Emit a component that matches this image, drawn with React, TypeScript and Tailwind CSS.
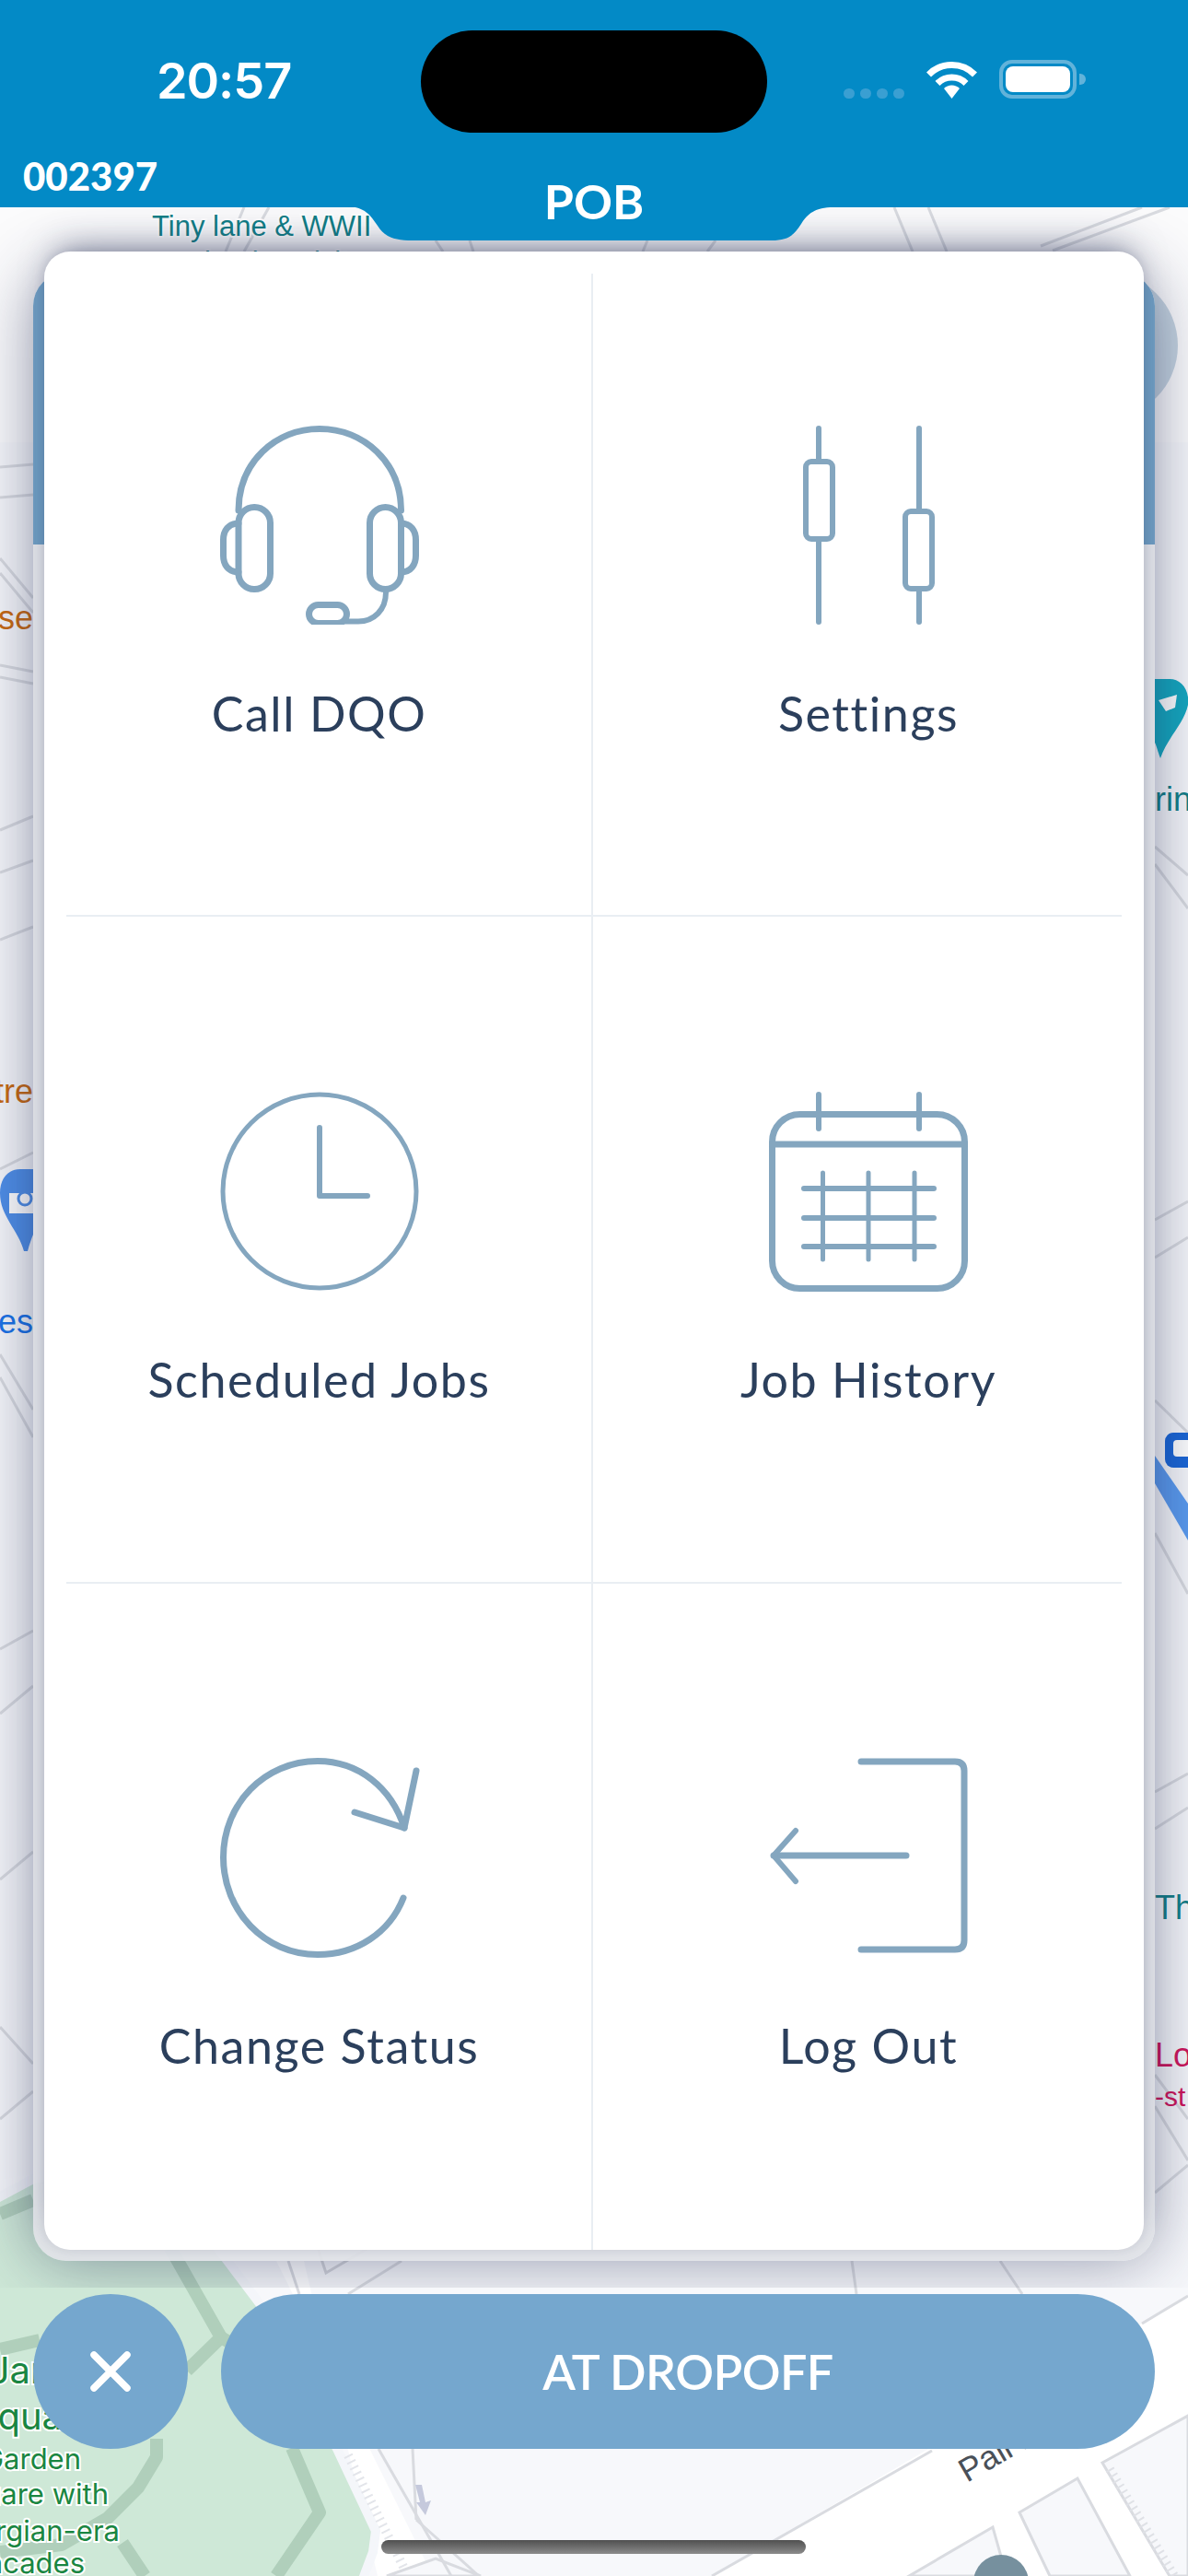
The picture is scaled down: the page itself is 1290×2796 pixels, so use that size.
import React from "react";

const stroke = "#84a6bf";

function Headset() {
  return (
    <svg width="216" height="216" viewBox="0 0 216 216" fill="none" stroke={stroke} strokeWidth="7" strokeLinecap="round" className="block overflow-hidden">
      <path d="M20 92 C20 40 60 3.5 108 3.5 C156 3.5 196.5 40 196.5 92" />
      <rect x="20" y="88.5" width="34.5" height="89" rx="17" />
      <rect x="162.5" y="88.5" width="34" height="89" rx="17" />
      <path d="M20 106 C9 106 3.5 114 3.5 124 V141 C3.5 151 9 159 20 159" />
      <path d="M196.5 106 C207 106 212.5 114 212.5 124 V141 C212.5 151 207 159 196.5 159" />
      <path d="M180 181 C180 200 167 212.5 150 212.5 H136" strokeWidth="6" />
      <rect x="96.5" y="194.5" width="41" height="20" rx="10" />
    </svg>
  );
}

function Sliders() {
  return (
    <svg width="216" height="216" viewBox="0 0 216 216" fill="none" stroke={stroke} strokeWidth="6" strokeLinecap="round" className="block">
      <path d="M54 3 V37 M54 125 V213" />
      <rect x="40" y="39" width="29" height="84" rx="6" />
      <path d="M163 3 V91 M163 179 V213" />
      <rect x="148" y="93" width="29" height="84" rx="6" />
    </svg>
  );
}

function Clock() {
  return (
    <svg width="216" height="216" viewBox="0 0 216 216" fill="none" stroke={stroke} strokeWidth="6" strokeLinecap="round" strokeLinejoin="round" className="block">
      <circle cx="108" cy="108" r="105" strokeWidth="5" />
      <path d="M108 39 V113 H160" />
    </svg>
  );
}

function Calendar() {
  return (
    <svg width="216" height="216" viewBox="0 0 216 216" fill="none" stroke={stroke} strokeWidth="7" strokeLinecap="round" className="block overflow-visible">
      <rect x="3.5" y="24.5" width="209" height="189" rx="30" />
      <path d="M3.5 57 H212.5" />
      <path d="M54 3 V40 M163 3 V40" strokeWidth="6" />
      <path d="M38 105 H179 M38 137 H179 M38 168 H179" strokeWidth="6" />
      <path d="M58.5 88 V182 M108 88 V182 M158 88 V182" strokeWidth="5" />
    </svg>
  );
}

function Refresh() {
  return (
    <svg width="216" height="216" viewBox="0 0 216 216" fill="none" stroke={stroke} strokeWidth="7" strokeLinecap="round" strokeLinejoin="round" className="block overflow-visible">
      <path d="M199 152 C184 190 148 213.5 106 213.5 C48 213.5 3.5 166 3.5 108 C3.5 50 48 3.5 106 3.5 C150 3.5 186 32 200 76" />
      <path d="M213 14 L200 76 L146 59" />
    </svg>
  );
}

function Logout() {
  return (
    <svg width="216" height="216" viewBox="0 0 216 216" fill="none" stroke={stroke} strokeWidth="7" strokeLinecap="round" strokeLinejoin="round" className="block overflow-visible">
      <path d="M100 4 H202 Q212 4 212 14 V198 Q212 208 202 208 H100" />
      <path d="M149 106 H5" />
      <path d="M29 79 L5 106 L29 134" strokeWidth="6" />
    </svg>
  );
}

const gl = [
  [971, 225, 991, 273], [1008, 225, 1028, 273], [1130, 267, 1240, 225], [1143, 272, 1270, 225],
  [473, 261, 481, 273], [510, 261, 514, 273], [703, 261, 698, 273], [777, 261, 768, 273],
  [292, 225, 265, 273], [265, 225, 245, 273],
  [0, 507, 36, 504], [0, 540, 36, 537], [0, 606, 36, 649], [0, 622, 36, 665],
  [0, 722, 36, 729], [0, 735, 36, 742], [0, 901, 36, 886], [0, 947, 36, 934], [0, 1020, 36, 1006], [0, 1269, 36, 1251],
  [0, 1470, 36, 1530], [0, 1495, 36, 1560], [0, 1790, 36, 1770], [0, 1860, 36, 1830], [0, 2040, 36, 2010], [0, 2200, 36, 2240], [0, 2300, 36, 2270],
  [1254, 919, 1290, 950], [1254, 938, 1290, 986], [1254, 1324, 1290, 1304], [1254, 1365, 1290, 1343],
  [1254, 1520, 1290, 1555], [1254, 1664, 1290, 1730], [1254, 1945, 1290, 1925], [1254, 1985, 1290, 1962],
  [1254, 2252, 1290, 2300], [1254, 2286, 1290, 2345], [1254, 2380, 1290, 2350],
  [313, 2454, 325, 2490], [378, 2490, 436, 2454], [925, 2454, 930, 2490], [1086, 2454, 1110, 2490],
  [1240, 2522, 1290, 2492], [411, 2658, 490, 2796], [448, 2658, 452, 2735], [452, 2735, 520, 2796],
  [773, 2796, 1012, 2660],
];

function MapLayer() {
  return (
    <svg className="absolute top-0 left-0" width="1290" height="2796" viewBox="0 0 1290 2796" fontFamily="'Liberation Sans', sans-serif">
      <rect x="0" y="0" width="1290" height="2796" fill="#f7f8fb" />
      <path d="M0 225 H1290 V480 H0 Z" fill="#fbfbfc" />
      <path d="M773 2796 L1240 2522 L1290 2492 V2622 L1197 2673 L1270 2796 Z" fill="#ffffff" />
      <path d="M300 2454 L470 2796 H410 L330 2454 Z" fill="#ffffff" />
      <path d="M1197 2673 L1290 2622 V2796 H1270 Z" fill="#f7f8fb" stroke="#d9dbe0" strokeWidth="3" />
      <path d="M1107 2727 L1170 2690 L1227 2796 H1140 Z" fill="#f7f8fb" stroke="#d9dbe0" strokeWidth="3" />
      <path d="M987 2796 L1078 2743 L1093 2796 Z" fill="#f7f8fb" stroke="#d9dbe0" strokeWidth="3" />
      <path d="M420 2796 L473 2777 L522 2796 Z" fill="#f7f8fb" stroke="#d9dbe0" strokeWidth="3" />
      <path d="M354 2467 L400 2440 L345 2440 Z" fill="none" stroke="#d3d5da" strokeWidth="3" />
      <path d="M-20 2395 L36 2365 L160 2340 L247 2454 L287 2507 L367 2660 L408 2747 L405 2770 L390 2810 H-20 Z" fill="#cee8d7" stroke="#f4f6fa" strokeWidth="10" strokeLinejoin="round" />
      <g fill="none" stroke="#b0cfbb" strokeWidth="14" strokeLinejoin="round">
        <path d="M185 2440 L240 2537 L203 2573" />
        <path d="M240 2537 L280 2560" />
        <path d="M0 2550 L43 2540" />
        <path d="M170 2647 V2667 L150 2700 L117 2733 L67 2762 L0 2770" />
        <path d="M317 2657 L347 2727 L300 2796" />
        <path d="M133 2760 L157 2796" />
        <path d="M0 2403 L36 2388" />
      </g>
      <g stroke="#d9dbe0" strokeWidth="3" fill="none">
        {gl.map(([a, b, c, d], i) => (
          <line key={i} x1={a} y1={b} x2={c} y2={d} />
        ))}
      </g>
      <path d="M378 2665 L440 2790" stroke="#e3e5ea" strokeWidth="10" strokeDasharray="2 5" fill="none" />
      <path d="M1205 2680 L1275 2796" stroke="#dfe1e6" strokeWidth="10" strokeDasharray="2 5" fill="none" />
      <path d="M451 2697 L458 2697 L462 2716 L468 2714 L462 2730 L452 2716 L456 2716 Z" fill="#c5c9dc" />
      <text x="165" y="256" fontSize="31" fill="#127f87" stroke="#ffffff" strokeWidth="4" paintOrder="stroke">Tiny lane &amp; WWII</text>
      <text x="222" y="295" fontSize="31" fill="#127f87" stroke="#ffffff" strokeWidth="4" paintOrder="stroke">bunker visit</text>
      <text x="36" y="683" textAnchor="end" fontSize="36" fill="#c96a10">se</text>
      <text x="36" y="1197" textAnchor="end" fontSize="36" fill="#c96a10">tre</text>
      <text x="36" y="1447" textAnchor="end" fontSize="36" fill="#1a73e8">nes</text>
      <path d="M36 1269 H22 C8 1269 0 1280 0 1295 C0 1320 20 1335 26 1358 H30 C32 1350 34 1345 36 1340 Z" fill="#4f8fe8" />
      <rect x="10" y="1295" width="26" height="22" fill="#ffffff" />
      <circle cx="27" cy="1301" r="7" fill="none" stroke="#4f8fe8" strokeWidth="3" />
      <path d="M1254 737 H1270 C1282 737 1292 748 1290 765 C1286 785 1268 800 1260 823 C1257 815 1256 810 1254 806 Z" fill="#14a8bf" />
      <path d="M1258 760 L1278 754 L1276 768 L1266 772 Z" fill="#ffffff" />
      <text x="1254" y="880" fontSize="36" fill="#127f87">rin</text>
      <path d="M1254 1580 L1290 1632 V1672 L1254 1610 Z" fill="#5a9bef" />
      <rect x="1265" y="1555" width="50" height="38" rx="9" fill="#1a66d6" />
      <rect x="1274" y="1563" width="22" height="18" rx="4" fill="#ffffff" />
      <text x="1254" y="2083" fontSize="36" fill="#127f87">Th</text>
      <text x="1254" y="2243" fontSize="36" fill="#d0145a">Lo</text>
      <text x="1254" y="2286" fontSize="30" fill="#d0145a">-st</text>
      <g fontFamily="Inter, sans-serif" fill="#1a8641" stroke="#ffffff" strokeWidth="4" paintOrder="stroke" textAnchor="end">
        <text x="48" y="2587" fontSize="40">Jar</text>
        <text x="68" y="2637" fontSize="40">qua</text>
        <text x="88" y="2680" fontSize="31">Garden</text>
        <text x="118" y="2718" fontSize="31">uare with</text>
        <text x="130" y="2758" fontSize="31">rgian-era</text>
        <text x="92" y="2793" fontSize="31">acades</text>
      </g>
      <text transform="translate(1050 2695) rotate(-30)" fontSize="36" fill="#4a5058">Pall Mall</text>
      <circle cx="1087" cy="2803" r="30" fill="#76909e" />
      <circle cx="1199" cy="375" r="80" fill="#c5d4e0" />
    </svg>
  );
}

function Wifi() {
  return (
    <svg width="57" height="41" viewBox="0 0 57 41" className="block" fill="none" stroke="#ffffff" strokeWidth="7">
      <path d="M3.5 15 A35 35 0 0 1 53.5 15" />
      <path d="M13 24.5 A22 22 0 0 1 44 24.5" />
      <path d="M28.5 41 L20 30 A12 12 0 0 1 37 30 Z" fill="#ffffff" stroke="none" />
    </svg>
  );
}

function Cell({ label, icon, left, pt, first }: { label: string; icon: React.ReactNode; left?: boolean; pt: string; first?: boolean }) {
  return (
    <div className={left ? `flex flex-col items-center border-r-2 border-[#e9eef3] pl-[3px] ${first ? "mt-[24px]" : ""} ${pt}` : `flex flex-col items-center ${pt}`}>
      {icon}
      <div className="mt-[70px] text-[52px] leading-none tracking-[0.03em] text-[#2b3f5c] font-[Lato,sans-serif]">{label}</div>
    </div>
  );
}

export default function App() {
  return (
    <div className="relative w-[1290px] h-[2796px] overflow-hidden font-[Lato,sans-serif]">
      <MapLayer />

      <header className="relative z-10 h-[225px] bg-[#038ac6] pt-[33px] text-white">
        <svg className="absolute top-[224px] left-0" width="1290" height="38" viewBox="0 224 1290 38">
          <path d="M372 224 H378 C396 225 402 233 410 245 C418 258 430 261 448 261 H838 C855 261 862 256 870 243 C877 232 885 225 905 225 V224 Z" fill="#038ac6" />
        </svg>
        <div className="flex h-[111px]">
          <div className="w-[457px] pl-[170px] pt-[28px] text-[54px] leading-none font-semibold font-[Inter,sans-serif] tracking-[-0.02em]">20:57</div>
          <div className="w-[376px] h-[111px] rounded-[56px] bg-black" />
          <div className="flex items-end gap-[23px] pl-[83px] h-[74px]">
            <div className="flex gap-[6px]">
              <div className="w-[12px] h-[11px] rounded-full bg-[#3a9fd2]" />
              <div className="w-[12px] h-[11px] rounded-full bg-[#3a9fd2]" />
              <div className="w-[12px] h-[11px] rounded-full bg-[#3a9fd2]" />
              <div className="w-[12px] h-[11px] rounded-full bg-[#3a9fd2]" />
            </div>
            <Wifi />
            <div className="flex items-center gap-[3px]">
              <div className="w-[84px] h-[42px] rounded-[14px] border-[4px] border-[#62b3da] p-[3px]">
                <div className="w-full h-full rounded-[8px] bg-white" />
              </div>
              <div className="w-[7px] h-[12px] rounded-r-full bg-[#62b3da]" />
            </div>
          </div>
        </div>
        <div className="relative grid grid-cols-[1fr_auto_1fr] mt-[26px]">
          <div className="pl-[25px] text-[42px] leading-none font-black">002397</div>
          <div className="pt-[22px] text-[52px] leading-none font-bold">POB</div>
          <div />
        </div>
      </header>

      <main className="relative">
        <div className="overflow-hidden h-[2258px] px-[36px] pt-[71px]">
          <div className="relative rounded-[36px] bg-[#e0e3e8]/95 shadow-[0_0_72px_rgba(30,40,80,0.46)] pb-[12px]">
            <div className="absolute top-0 left-0 right-0 h-[295px] rounded-t-[36px] bg-[#6f9dc2]" />
            <div className="relative top-[-23px] -mb-[23px] mx-[12px] rounded-[28px] bg-white shadow-[0_-16px_36px_-14px_rgba(30,40,80,0.5),0_0_12px_rgba(30,40,80,0.1)] overflow-hidden">
              <div className="grid grid-cols-[596px_1fr] h-[720px]">
                <Cell first left pt="pt-[165px]" label="Call DQO" icon={<Headset />} />
                <Cell pt="pt-[189px]" label="Settings" icon={<Sliders />} />
              </div>
              <div className="h-[2px] mx-[24px] bg-[#e9eef3]" />
              <div className="grid grid-cols-[596px_1fr] h-[722px]">
                <Cell left pt="pt-[190px]" label="Scheduled Jobs" icon={<Clock />} />
                <Cell pt="pt-[190px]" label="Job History" icon={<Calendar />} />
              </div>
              <div className="h-[2px] mx-[24px] bg-[#e9eef3]" />
              <div className="grid grid-cols-[596px_1fr] h-[723px]">
                <Cell left pt="pt-[189px]" label="Change Status" icon={<Refresh />} />
                <Cell pt="pt-[189px]" label="Log Out" icon={<Logout />} />
              </div>
            </div>
          </div>
        </div>

        <div className="flex gap-[36px] px-[36px] mt-[7px]">
          <button className="w-[168px] h-[168px] shrink-0 rounded-full bg-[#75a7ce] flex items-center justify-center">
            <svg width="44" height="44" viewBox="0 0 44 44" fill="none" stroke="#ffffff" strokeWidth="7.5" strokeLinecap="round">
              <path d="M4 4 L40 40 M40 4 L4 40" />
            </svg>
          </button>
          <button className="flex-1 h-[168px] rounded-full bg-[#75a7ce] text-white text-[52px] font-semibold tracking-[-0.01em] leading-none">AT DROPOFF</button>
        </div>
      </main>

      <div className="absolute left-[414px] top-[2757px] w-[461px] h-[15px] rounded-full bg-linear-to-b from-[#505050] to-[#8c8c8c]" />
    </div>
  );
}
